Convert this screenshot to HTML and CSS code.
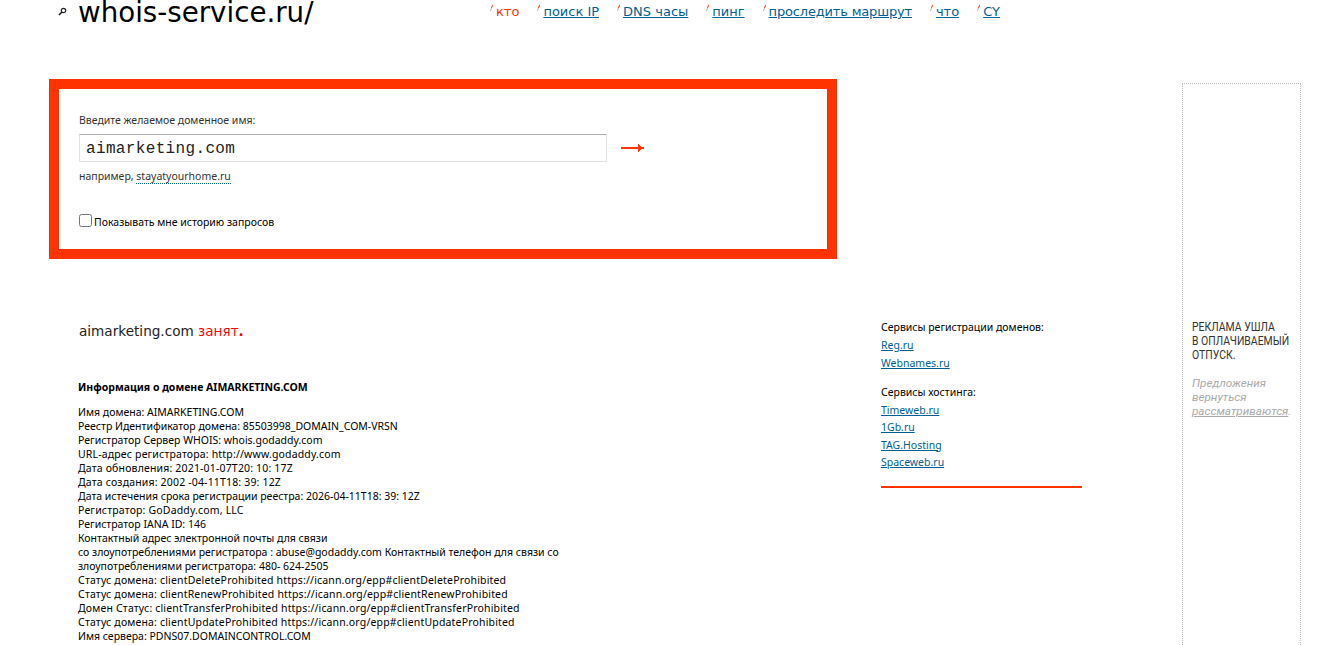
FILE: index.html
```html
<!DOCTYPE html>
<html>
<head>
  <title>whois-service.ru</title>
  <link rel="stylesheet" href="styles.css">
</head>
<body>

  <div class="header">
    <a class="logo" href="#">
      <svg class="logo-icon" width="9" height="9" viewBox="0 0 9 9"><circle cx="5.5" cy="3.5" r="2.2" fill="none" stroke="#222" stroke-width="1.2"/><path d="M4 5 L1 8" stroke="#111" stroke-width="1.5"/></svg>
      <span>whois-service.ru/</span>
    </a>
    <div class="nav">
      <span class="nav-item current">кто</span>
      <a class="nav-item" href="#">поиск IP</a>
      <a class="nav-item" href="#">DNS часы</a>
      <a class="nav-item" href="#">пинг</a>
      <a class="nav-item tight" href="#">проследить маршрут</a>
      <a class="nav-item" href="#">что</a>
      <a class="nav-item" href="#">CY</a>
    </div>
  </div>

  <div class="page">
    <div class="main">
      <form class="search-box">
        <label class="search-label">Введите желаемое доменное имя:</label>
        <div class="search-row">
          <input class="search-input" type="text" value="aimarketing.com">
          <svg class="go-arrow" width="23" height="8" viewBox="0 0 23 8"><path d="M0 3h18v2h-18z" fill="#ff3300"/><path d="M17 0h1v1h1v1h1v1h3v2h-3v1h-1v1h-1v1h-1z" fill="#ff3300"/></svg>
        </div>
        <div class="search-hint">например, <a href="#">stayatyourhome.ru</a></div>
        <label class="history"><input type="checkbox"><span>Показывать мне историю запросов</span></label>
      </form>

      <div class="result-title">aimarketing.com <span class="taken">занят<b>.</b></span></div>

      <h3 class="info-title">Информация о домене AIMARKETING.COM</h3>
      <div class="info">
        <div>Имя домена: AIMARKETING.COM</div>
        <div>Реестр Идентификатор домена: 85503998_DOMAIN_COM-VRSN</div>
        <div>Регистратор Сервер WHOIS: whois.godaddy.com</div>
        <div class="wide">URL-адрес регистратора: http://www.godaddy.com</div>
        <div class="wide">Дата обновления: 2021-01-07T20: 10: 17Z</div>
        <div class="wide">Дата создания: 2002 -04-11T18: 39: 12Z</div>
        <div>Дата истечения срока регистрации реестра: 2026-04-11T18: 39: 12Z</div>
        <div class="wide">Регистратор: GoDaddy.com, LLC</div>
        <div>Регистратор IANA ID: 146</div>
        <div>Контактный адрес электронной почты для связи</div>
        <div>со злоупотреблениями регистратора : abuse@godaddy.com Контактный телефон для связи со</div>
        <div>злоупотреблениями регистратора: 480- 624-2505</div>
        <div class="wide">Статус домена: clientDeleteProhibited https://icann.org/epp#clientDeleteProhibited</div>
        <div class="wide">Статус домена: clientRenewProhibited https://icann.org/epp#clientRenewProhibited</div>
        <div class="wide">Домен Статус: clientTransferProhibited https://icann.org/epp#clientTransferProhibited</div>
        <div class="wide">Статус домена: clientUpdateProhibited https://icann.org/epp#clientUpdateProhibited</div>
        <div>Имя сервера: PDNS07.DOMAINCONTROL.COM</div>
      </div>
    </div>

    <div class="services">
      <div class="services-title">Сервисы регистрации доменов:</div>
      <a href="#">Reg.ru</a>
      <a href="#">Webnames.ru</a>
      <div class="services-title second">Сервисы хостинга:</div>
      <a href="#">Timeweb.ru</a>
      <a href="#">1Gb.ru</a>
      <a href="#">TAG.Hosting</a>
      <a href="#">Spaceweb.ru</a>
      <div class="services-line"></div>
    </div>

    <div class="ad">
      <div class="ad-title">РЕКЛАМА УШЛА<br>В ОПЛАЧИВАЕМЫЙ<br>ОТПУСК.</div>
      <div class="ad-text">Предложения вернуться <a href="#">рассматриваются</a>.</div>
    </div>
  </div>

</body>
</html>
```

FILE: styles.css
```css
html, body {
  height: 645px;
  overflow: hidden;
}
body {
  margin: 0;
  background: #fff;
  color: #000;
  font-family: "Noto Sans", sans-serif;
  font-size: 10.5px;
  line-height: 14px;
}
a {
  color: #005f96;
}
.header {
  display: flex;
  height: 79px;
  padding-left: 58px;
}
.logo {
  display: flex;
  align-items: flex-start;
  width: 432px;
  color: #000;
  text-decoration: none;
  font-family: "DejaVu Sans", sans-serif;
  font-size: 27.7px;
  line-height: 26px;
}
.logo-icon {
  margin: 7px 11px 0 0;
}
.nav {
  display: flex;
  gap: 18px;
  padding-top: 3px;
  font-family: "DejaVu Sans", sans-serif;
  font-size: 13px;
  line-height: 17px;
}
.nav-item {
  position: relative;
  margin-left: 6px;
}
.nav-item:before {
  content: "";
  position: absolute;
  left: -5px;
  top: 2px;
  width: 1px;
  height: 6px;
  background: linear-gradient(#ff3300 50%, #bbb 50%);
  transform: skewX(-20deg);
}
.tight {
  letter-spacing: -0.17px;
}
.current {
  color: #ff3300;
}
.page {
  display: flex;
  padding-left: 49px;
}
.main {
  width: 788px;
  flex: none;
}
.search-box {
  display: block;
  box-sizing: border-box;
  height: 180px;
  border: 10px solid #ff3300;
  padding: 24px 20px 0;
  color: #333;
}
.search-label {
  display: block;
}
.search-row {
  display: flex;
  align-items: center;
  margin-top: 7px;
}
.search-input {
  box-sizing: border-box;
  width: 528px;
  height: 28px;
  padding: 2px 6px 0;
  border: 1px solid #e2e2ea;
  border-top-color: #b0b0b0;
  outline: none;
  color: #222;
  font-family: "Liberation Mono", monospace;
  font-size: 16px;
  letter-spacing: 0.35px;
}
.go-arrow {
  margin-left: 14px;
}
.search-hint {
  margin-top: 7px;
}
.search-hint a {
  color: #333;
  text-decoration: none;
  border-bottom: 1px dotted #005f96;
}
.history {
  display: flex;
  align-items: flex-start;
  margin-top: 31px;
  color: #000;
}
.history input {
  width: 13px;
  height: 13px;
  margin: 0 2px 0 0;
}
.history span {
  margin-top: 1px;
}
.result-title {
  margin: 63px 0 0 30px;
  font-family: "DejaVu Sans", sans-serif;
  font-size: 13.6px;
  line-height: 18px;
  color: #222;
}
.taken {
  color: #f00;
}
.info-title {
  margin: 40px 0 0 29px;
  font-size: 10.5px;
  line-height: 14px;
}
.info {
  margin: 11px 0 0 29px;
  width: 520px;
}
.wide {
  letter-spacing: 0.17px;
}
.services {
  display: flex;
  flex-direction: column;
  align-items: flex-start;
  width: 201px;
  margin-left: 44px;
  padding-top: 241px;
}
.services a {
  margin-top: 3.35px;
}
.services-title {
  margin-bottom: 1px;
}
.services-title.second {
  margin-top: 15px;
}
.services-line {
  align-self: stretch;
  height: 2px;
  margin-top: 17px;
  background: #ff3300;
}
.ad {
  box-sizing: border-box;
  width: 119px;
  height: 570px;
  margin: 4px 0 0 100px;
  padding: 236px 6px 0 9px;
  border: 1px dotted #bbb;
  border-bottom: none;
  font-family: Roboto, sans-serif;
}
.ad-title {
  font-size: 12px;
  color: #333;
  white-space: nowrap;
  transform: scaleX(0.87);
  transform-origin: left;
}
.ad-text {
  margin-top: 14px;
  font-size: 11.7px;
  font-style: italic;
  color: #aaa;
}
.ad-text a {
  color: #aaa;
}
```
